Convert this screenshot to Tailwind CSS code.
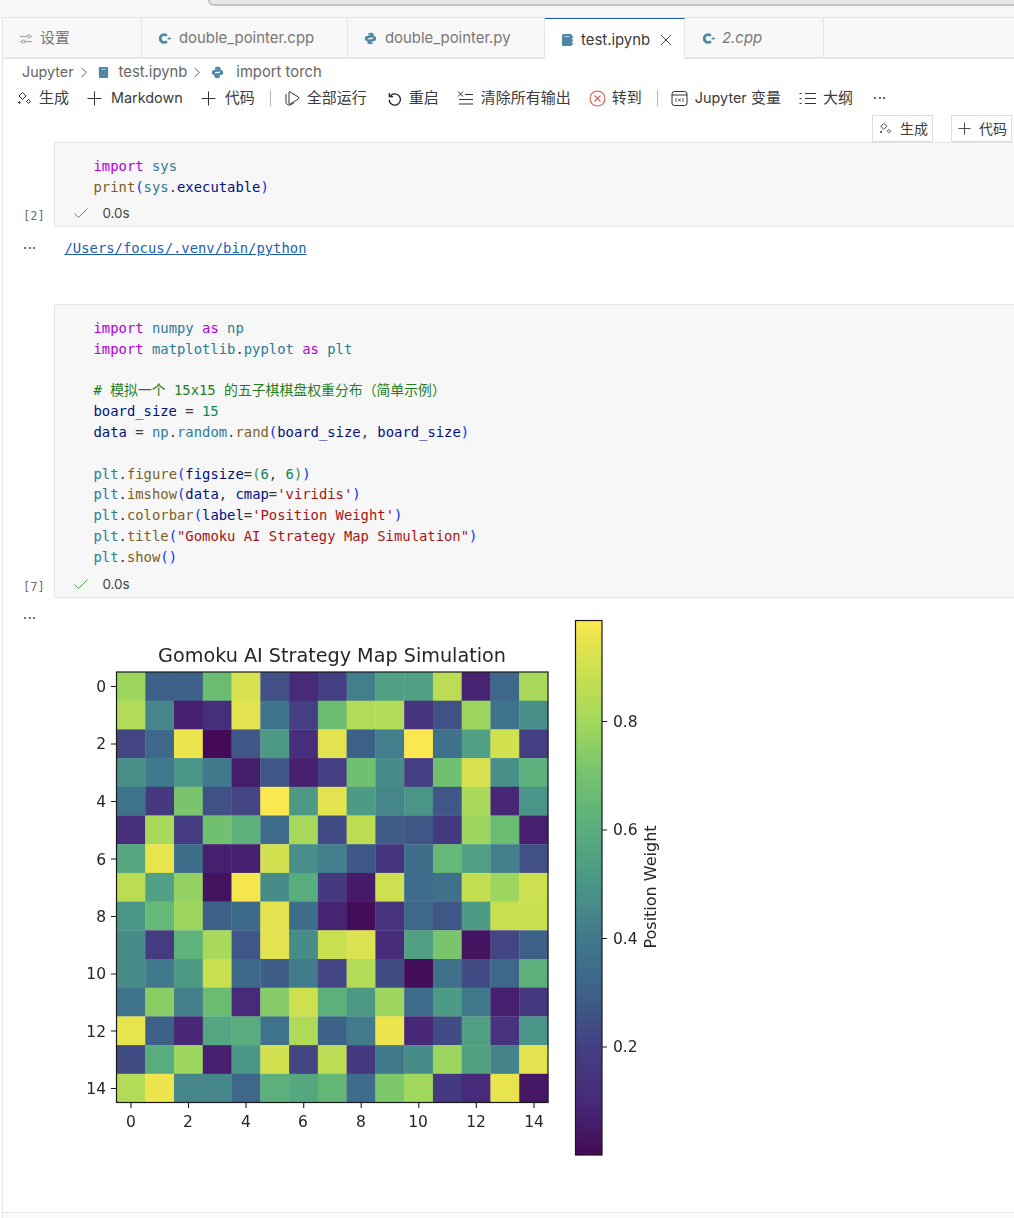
<!DOCTYPE html>
<html lang="zh-CN">
<head>
<meta charset="utf-8">
<title>test.ipynb</title>
<script src="https://cdn.jsdelivr.net/npm/@tailwindcss/browser@4"></script>
</head>
<body class="bg-white">
<div class="w-[1014px] h-[1218px] overflow-hidden flex flex-col bg-white text-[#3b3b3b] font-['Inter','Noto_Sans_CJK_SC',sans-serif] text-[15px]">

  <!-- window title strip -->
  <div class="h-[18px] shrink-0 bg-[#f8f8f8] border-b border-[#e5e5e5] pl-[208px]">
    <div class="h-[6px] bg-[#e8e8e8] border-l-2 border-b-2 border-[#c4c4c4] rounded-bl-[7px]"></div>
  </div>

  <div class="flex-1 flex flex-col ml-[2px] border-l border-[#e5e5e5] min-h-0">
    <!-- tabs -->
    <div class="h-[41px] shrink-0 flex bg-[#f8f8f8] border-b-2 border-[#e8e8e8] text-[#777777] text-[14.900px]">
      <div class="w-[139px] border-r border-[#e5e5e5] flex items-center pl-[16px] gap-[7px] pt-[2px]">
        <svg class="w-[14px] h-[14px]" viewBox="0 0 16 16" fill="none" stroke="#8a8a8a" stroke-width="1"><path d="M1 5h8M13 5h2M1 11h2M7 11h8"/><circle cx="11" cy="5" r="1.8"/><circle cx="5" cy="11" r="1.8"/></svg>
        <span>设置</span>
      </div>
      <div class="w-[206px] border-r border-[#e5e5e5] flex items-center pl-[16px] gap-[8px] pt-[2px]">
        <svg class="w-[13px] h-[13px]" viewBox="0 0 14 14" fill="none"><path d="M9.500 4A4.200 4.200 0 1 0 9.500 10" stroke="#4e86a6" stroke-width="3"/><path d="M10.200 7h3.600M12 5.200v3.600" stroke="#4e86a6" stroke-width="1"/></svg>
        <span>double_pointer.cpp</span>
      </div>
      <div class="w-[197px] border-r border-[#e5e5e5] flex items-center pl-[16px] gap-[8px] pt-[2px]">
        <svg class="w-[13px] h-[13px]" viewBox="0 0 16 16"><path fill="#4e86a6" d="M7.900 1C5 1 5 2.300 5 3v1.500h3.100V5H3.400C2 5 1 6.100 1 8s1 3 2.300 3h1.300V9.300c0-1.300 1.100-2.300 2.400-2.300h3c1 0 1.900-.9 1.900-1.900V3c0-1.200-1.400-2-4-2zM6.300 2.200a.7.7 0 1 1 0 1.500.7.7 0 0 1 0-1.500z"/><path fill="#4e86a6" d="M8.100 15c2.900 0 2.900-1.300 2.900-2v-1.500H7.900V11h4.700C14 11 15 9.900 15 8s-1-3-2.300-3h-1.300v1.700c0 1.300-1.100 2.300-2.400 2.300h-3c-1 0-1.900.9-1.900 1.900V13c0 1.200 1.400 2 4 2zM9.700 13.800a.7.7 0 1 1 0-1.500.7.7 0 0 1 0 1.500z"/></svg>
        <span>double_pointer.py</span>
      </div>
      <div class="w-[140px] -mb-[2px] border-r border-[#e5e5e5] border-t border-t-[#1f5fb0] bg-white flex items-center pl-[15px] gap-[7px] text-[#3b3b3b] text-[14.900px] pt-[2px]">
        <svg class="w-[14px] h-[14px]" viewBox="0 0 14 14"><rect x="2" y="1" width="10" height="12" rx="1.500" fill="#4e86a6"/><path d="M4.500 3.500h5" stroke="#bcd3e0" stroke-width="1"/><path d="M12.700 3v2M12.700 6.500v2M12.700 10v1.500" stroke="#4e86a6" stroke-width="1"/></svg>
        <span>test.ipynb</span>
        <svg class="w-[12px] h-[12px] ml-[3px]" viewBox="0 0 12 12" stroke="#444" stroke-width="1" fill="none"><path d="M1 1l10 10M11 1L1 11"/></svg>
      </div>
      <div class="w-[139px] border-r border-[#e5e5e5] flex items-center pl-[17px] gap-[7px] pt-[2px]">
        <svg class="w-[13px] h-[13px]" viewBox="0 0 14 14" fill="none"><path d="M9.500 4A4.200 4.200 0 1 0 9.500 10" stroke="#4e86a6" stroke-width="3"/><path d="M10.200 7h3.600M12 5.200v3.600" stroke="#4e86a6" stroke-width="1"/></svg>
        <span class="italic">2.cpp</span>
      </div>
    </div>

    <!-- breadcrumb -->
    <div class="h-[26px] shrink-0 flex items-center pl-[19px] text-[14.800px] text-[#666666]">
      <span class="text-[14.300px]">Jupyter</span>
      <svg class="w-[9px] h-[11px] ml-[6px]" viewBox="0 0 9 11" fill="none" stroke="#666" stroke-width="1"><path d="M1.500 1l5 4.500-5 4.500"/></svg>
      <svg class="w-[13px] h-[13px] ml-[8px]" viewBox="0 0 14 14"><rect x="2" y="1" width="10" height="12" rx="1.500" fill="#4e86a6"/><path d="M4.500 3.500h5" stroke="#bcd3e0" stroke-width="1"/></svg>
      <span class="ml-[9px]">test.ipynb</span>
      <svg class="w-[9px] h-[11px] ml-[6px]" viewBox="0 0 9 11" fill="none" stroke="#666" stroke-width="1"><path d="M1.500 1l5 4.500-5 4.500"/></svg>
      <svg class="w-[13px] h-[13px] ml-[9px]" viewBox="0 0 16 16"><path fill="#4e86a6" d="M7.900 1C5 1 5 2.300 5 3v1.500h3.100V5H3.400C2 5 1 6.100 1 8s1 3 2.300 3h1.300V9.300c0-1.300 1.100-2.300 2.400-2.300h3c1 0 1.900-.9 1.900-1.900V3c0-1.200-1.400-2-4-2z"/><path fill="#4e86a6" d="M8.100 15c2.900 0 2.900-1.300 2.900-2v-1.500H7.900V11h4.700C14 11 15 9.900 15 8s-1-3-2.300-3h-1.300v1.700c0 1.300-1.100 2.300-2.400 2.300h-3c-1 0-1.900.9-1.900 1.900V13c0 1.200 1.400 2 4 2z"/></svg>
      <span class="ml-[12px]">import torch</span>
    </div>

    <!-- toolbar -->
    <div class="h-[26px] shrink-0 flex items-center pl-[14px] text-[15px] text-[#3b3b3b]">
      <svg class="w-[15px] h-[15px]" viewBox="0 0 15 15" fill="none" stroke="#333" stroke-width="1"><path d="M5.500 1.500l3.500 3.500-3.500 3.500-3.500-3.500z"/><path d="M11.500 8.500l2 2-2 2-2-2z"/><path d="M2.500 10.500l1 1-1 1-1-1z" fill="#333"/></svg>
      <span class="ml-[7px]">生成</span>
      <svg class="w-[15px] h-[15px] ml-[18px]" viewBox="0 0 15 15" stroke="#333" stroke-width="1"><path d="M7.500 .5v14M.5 7.500h14"/></svg>
      <span class="ml-[9px] text-[14.400px]">Markdown</span>
      <svg class="w-[15px] h-[15px] ml-[18px]" viewBox="0 0 15 15" stroke="#333" stroke-width="1"><path d="M7.500 .5v14M.5 7.500h14"/></svg>
      <span class="ml-[9px]">代码</span>
      <div class="w-px h-[16px] bg-[#b5b5b5] ml-[15px]"></div>
      <svg class="w-[16px] h-[16px] ml-[13px]" viewBox="0 0 16 16" fill="none" stroke="#333" stroke-width="1"><path d="M5 2.500q0-1.200 1-.6l8.500 5.200q1 .9 0 1.800l-8.500 5.200q-1 .6-1-.6z"/><path d="M2 4v8.500q0 1 .8 1.500l1.700 1q.7.3 1.500 0l4-2"/></svg>
      <span class="ml-[7px]">全部运行</span>
      <svg class="w-[15px] h-[15px] ml-[20px]" viewBox="0 0 16 16" fill="none" stroke="#222" stroke-width="1.400"><path d="M3.500 5.500A6 6 0 1 1 2.300 9.500"/><path d="M2.500 2v4h4"/></svg>
      <span class="ml-[7px]">重启</span>
      <svg class="w-[16px] h-[14px] ml-[18px]" viewBox="0 0 16 14" fill="none" stroke="#333" stroke-width="1"><path d="M1 .5l5 5M6 .5L1 5.500M8 3.500h8M2 8.500h14M2 13h14"/></svg>
      <span class="ml-[8px]">清除所有输出</span>
      <svg class="w-[17px] h-[17px] ml-[18px]" viewBox="0 0 17 17" fill="none" stroke="#e5564d" stroke-width="1.100"><circle cx="8.500" cy="8.500" r="7.500"/><path d="M5.500 5.500l6 6M11.500 5.500l-6 6"/></svg>
      <span class="ml-[6px]">转到</span>
      <div class="w-px h-[16px] bg-[#b5b5b5] ml-[15px]"></div>
      <svg class="w-[17px] h-[17px] ml-[13px]" viewBox="0 0 17 17" fill="none" stroke="#333" stroke-width="1"><rect x="1" y="1.500" width="15" height="14" rx="2.500"/><path d="M1 5h15"/><path d="M5 8v4M12 8v4M7.300 8.500l2.400 3M9.700 8.500l-2.400 3" stroke-width=".8"/></svg>
      <span class="ml-[7px]"><span class="text-[14.400px]">Jupyter</span> 变量</span>
      <svg class="w-[17px] h-[13px] ml-[18px]" viewBox="0 0 17 13" fill="none" stroke="#333" stroke-width="1"><path d="M6 1.500h11M6 6.500h11M6 11.500h11M.5 1.500h2M.5 6.500h2M.5 11.500h2"/></svg>
      <span class="ml-[7px]">大纲</span>
      <div class="ml-[21px] flex gap-[2.500px]"><i class="block w-[2px] h-[2px] rounded-full bg-[#333]"></i><i class="block w-[2px] h-[2px] rounded-full bg-[#333]"></i><i class="block w-[2px] h-[2px] rounded-full bg-[#333]"></i></div>
    </div>

    <!-- cell toolbar -->
    <div class="h-[31px] shrink-0 flex justify-end gap-[18px] pr-[2px] pt-[4px] text-[#3b3b3b] text-[14px]">
      <div class="w-[61px] h-[27px] border border-[#dcdcdc] flex items-center pl-[6px] gap-[8px]">
        <svg class="w-[13px] h-[13px]" viewBox="0 0 15 15" fill="none" stroke="#333" stroke-width="1"><path d="M5.500 1.500l3.500 3.500-3.500 3.500-3.500-3.500z"/><path d="M11.500 8.500l2 2-2 2-2-2z"/><path d="M2.500 10.500l1 1-1 1-1-1z" fill="#333"/></svg>
        <span>生成</span>
      </div>
      <div class="w-[61px] h-[27px] border border-[#dcdcdc] flex items-center pl-[6px] gap-[8px]">
        <svg class="w-[13px] h-[13px]" viewBox="0 0 15 15" stroke="#333" stroke-width="1"><path d="M7.500 .5v14M.5 7.500h14"/></svg>
        <span>代码</span>
      </div>
    </div>

    <!-- cell 1 -->
    <div class="shrink-0 flex h-[85px]">
      <div class="w-[51px] shrink-0 relative"><span class="absolute left-[20px] bottom-[2px] text-[#6e6e6e] font-['DejaVu_Sans_Mono',monospace] text-[12px]">[2]</span></div>
      <div class="flex-1 bg-[#f7f7f7] border border-r-0 border-[#e5e5e5] pl-[38.500px] pt-[13px] font-['DejaVu_Sans_Mono','Noto_Sans_CJK_SC',monospace] text-[13.870px] leading-[20.800px]">
        <div><span class="text-[#af00db]">import</span> <span class="text-[#2f7a96]">sys</span></div>
        <div><span class="text-[#795e26]">print</span><span class="text-[#0431fa]">(</span><span class="text-[#2f7a96]">sys</span>.<span class="text-[#001080]">executable</span><span class="text-[#0431fa]">)</span></div>
        <div class="h-[26px] flex items-center -ml-[20px] mt-[3px] font-['Inter',sans-serif] text-[13.400px] text-[#444]">
          <svg class="w-[14px] h-[11px]" viewBox="0 0 14 11" fill="none" stroke="#4f9a4f" stroke-width="1"><path d="M.5 5.500l4 4 9-9"/></svg>
          <span class="ml-[15px]">0.0s</span>
        </div>
      </div>
    </div>

    <!-- output 1 -->
    <div class="shrink-0 h-[77px] flex">
      <div class="w-[51px] shrink-0 pl-[21px] pt-[20px]"><div class="flex gap-[2.500px]"><i class="block w-[2px] h-[2px] rounded-full bg-[#444]"></i><i class="block w-[2px] h-[2px] rounded-full bg-[#444]"></i><i class="block w-[2px] h-[2px] rounded-full bg-[#444]"></i></div></div>
      <div class="pl-[10.500px] pt-[11px] font-['DejaVu_Sans_Mono',monospace] text-[13.870px] leading-[20.800px] text-[#1a5fb4] underline">/Users/focus/.venv/bin/python</div>
    </div>

    <!-- cell 2 -->
    <div class="shrink-0 flex h-[294px]">
      <div class="w-[51px] shrink-0 relative"><span class="absolute left-[20px] bottom-[2px] text-[#6e6e6e] font-['DejaVu_Sans_Mono',monospace] text-[12px]">[7]</span></div>
      <div class="flex-1 bg-[#f7f7f7] border border-r-0 border-[#e5e5e5] pl-[38.500px] pt-[13px] font-['DejaVu_Sans_Mono','Noto_Sans_CJK_SC',monospace] text-[13.870px] leading-[20.800px]">
        <div><span class="text-[#af00db]">import</span> <span class="text-[#2f7a96]">numpy</span> <span class="text-[#af00db]">as</span> <span class="text-[#2f7a96]">np</span></div>
        <div><span class="text-[#af00db]">import</span> <span class="text-[#2f7a96]">matplotlib</span>.<span class="text-[#2f7a96]">pyplot</span> <span class="text-[#af00db]">as</span> <span class="text-[#2f7a96]">plt</span></div>
        <div class="h-[20.800px]"></div>
        <div class="text-[#1f7f1f]"># 模拟一个 15x15 的五子棋棋盘权重分布（简单示例）</div>
        <div><span class="text-[#001080]">board_size</span> = <span class="text-[#098658]">15</span></div>
        <div><span class="text-[#001080]">data</span> = <span class="text-[#2f7a96]">np</span>.<span class="text-[#2f7a96]">random</span>.<span class="text-[#795e26]">rand</span><span class="text-[#0431fa]">(</span><span class="text-[#001080]">board_size</span>, <span class="text-[#001080]">board_size</span><span class="text-[#0431fa]">)</span></div>
        <div class="h-[20.800px]"></div>
        <div><span class="text-[#2f7a96]">plt</span>.<span class="text-[#795e26]">figure</span><span class="text-[#0431fa]">(</span><span class="text-[#001080]">figsize</span>=<span class="text-[#319331]">(</span><span class="text-[#098658]">6</span>, <span class="text-[#098658]">6</span><span class="text-[#319331]">)</span><span class="text-[#0431fa]">)</span></div>
        <div><span class="text-[#2f7a96]">plt</span>.<span class="text-[#795e26]">imshow</span><span class="text-[#0431fa]">(</span><span class="text-[#001080]">data</span>, <span class="text-[#001080]">cmap</span>=<span class="text-[#a31515]">'viridis'</span><span class="text-[#0431fa]">)</span></div>
        <div><span class="text-[#2f7a96]">plt</span>.<span class="text-[#795e26]">colorbar</span><span class="text-[#0431fa]">(</span><span class="text-[#001080]">label</span>=<span class="text-[#a31515]">'Position Weight'</span><span class="text-[#0431fa]">)</span></div>
        <div><span class="text-[#2f7a96]">plt</span>.<span class="text-[#795e26]">title</span><span class="text-[#0431fa]">(</span><span class="text-[#a31515]">"Gomoku AI Strategy Map Simulation"</span><span class="text-[#0431fa]">)</span></div>
        <div><span class="text-[#2f7a96]">plt</span>.<span class="text-[#795e26]">show</span><span class="text-[#0431fa]">()</span></div>
        <div class="h-[26px] flex items-center -ml-[20px] mt-[4px] font-['Inter',sans-serif] text-[13.400px] text-[#444]">
          <svg class="w-[14px] h-[11px]" viewBox="0 0 14 11" fill="none" stroke="#4f9a4f" stroke-width="1"><path d="M.5 5.500l4 4 9-9"/></svg>
          <span class="ml-[15px]">0.0s</span>
        </div>
      </div>
    </div>

    <!-- output 2 : plot -->
    <div class="flex-1 flex min-h-0">
      <div class="w-[51px] shrink-0 pl-[21px] pt-[19px]"><div class="flex gap-[2.500px]"><i class="block w-[2px] h-[2px] rounded-full bg-[#444]"></i><i class="block w-[2px] h-[2px] rounded-full bg-[#444]"></i><i class="block w-[2px] h-[2px] rounded-full bg-[#444]"></i></div></div>
      <svg id="plot" class="w-[620px] h-[570px] mt-[12px] ml-[6px] shrink-0 blur-[0.3px]" viewBox="60 610 620 570" font-family="'DejaVu Sans',sans-serif" fill="#262626">
        <defs>
          <linearGradient id="vir" x1="0" y1="1" x2="0" y2="0">
            <stop offset="0" stop-color="#440a57"/><stop offset=".1" stop-color="#472a79"/><stop offset=".2" stop-color="#443f82"/><stop offset=".3" stop-color="#3d6088"/><stop offset=".4" stop-color="#40788c"/><stop offset=".5" stop-color="#4a9488"/><stop offset=".6" stop-color="#58ac7e"/><stop offset=".7" stop-color="#70c070"/><stop offset=".8" stop-color="#9cd65e"/><stop offset=".9" stop-color="#c8df4f"/><stop offset="1" stop-color="#fbe74e"/>
          </linearGradient>
        </defs>
        <g id="cells"></g>
        <rect x="116.500" y="672" width="431.500" height="430.500" fill="none" stroke="#1a1a1a" stroke-width="1.200"/>
        <text x="332" y="662" font-size="19.200px" text-anchor="middle">Gomoku AI Strategy Map Simulation</text>
        <g stroke="#1a1a1a" stroke-width="1.100">
          <path d="M131 1103v5M188.500 1103v5M246 1103v5M303.700 1103v5M361.200 1103v5M418.800 1103v5M476.300 1103v5M534 1103v5"/>
          <path d="M116 686.500h-5M116 744h-5M116 801.500h-5M116 859h-5M116 916.500h-5M116 974h-5M116 1031h-5M116 1088.500h-5"/>
          <path d="M602 721.500h5M602 830h5M602 938.500h5M602 1047h5"/>
        </g>
        <g font-size="15.500px" text-anchor="middle">
          <text x="131" y="1127">0</text><text x="188" y="1127">2</text><text x="246" y="1127">4</text><text x="303" y="1127">6</text><text x="361" y="1127">8</text><text x="418" y="1127">10</text><text x="476" y="1127">12</text><text x="534" y="1127">14</text>
        </g>
        <g font-size="15.500px" text-anchor="end">
          <text x="106" y="692">0</text><text x="106" y="749">2</text><text x="106" y="807">4</text><text x="106" y="865">6</text><text x="106" y="922">8</text><text x="106" y="979">10</text><text x="106" y="1037">12</text><text x="106" y="1094">14</text>
        </g>
        <g font-size="15.500px">
          <text x="613" y="727">0.8</text><text x="613" y="835">0.6</text><text x="613" y="944">0.4</text><text x="613" y="1052">0.2</text>
        </g>
        <rect x="575.500" y="620.500" width="26.500" height="534.500" fill="url(#vir)" stroke="#1a1a1a" stroke-width="1.200"/>
        <text transform="translate(656 887) rotate(-90)" font-size="16px" text-anchor="middle">Position Weight</text>
      </svg>
    </div>

    <div class="h-[6px] shrink-0 bg-[#fafafa] border-t border-[#e5e5e5]"></div>
  </div>
</div>
<script>
var d=[
[.8,.3,.3,.68,.93,.25,.1,.2,.42,.55,.55,.87,.08,.33,.83],
[.85,.45,.07,.12,.95,.38,.2,.68,.85,.85,.15,.25,.8,.38,.48],
[.22,.33,.97,.0,.27,.52,.12,.95,.3,.42,1,.37,.55,.92,.2],
[.48,.4,.5,.4,.06,.27,.07,.2,.7,.47,.2,.7,.93,.48,.62],
[.38,.17,.72,.25,.22,1,.52,.95,.53,.45,.5,.27,.83,.09,.5],
[.12,.83,.18,.7,.62,.35,.82,.24,.88,.29,.27,.17,.8,.68,.07],
[.58,.96,.36,.07,.07,.92,.48,.42,.28,.15,.36,.66,.55,.42,.25],
[.87,.55,.78,.03,.99,.47,.6,.17,.05,.91,.35,.37,.89,.8,.91],
[.5,.66,.8,.3,.34,.95,.36,.08,.01,.14,.33,.27,.53,.9,.9],
[.47,.18,.63,.83,.27,.95,.47,.9,.94,.1,.55,.72,.03,.22,.3],
[.47,.4,.53,.9,.34,.29,.41,.22,.85,.24,.01,.37,.24,.33,.62],
[.38,.76,.43,.68,.1,.75,.91,.62,.52,.8,.35,.53,.4,.07,.16],
[.96,.3,.09,.57,.6,.38,.84,.31,.41,.97,.09,.24,.55,.14,.5],
[.24,.6,.8,.07,.51,.92,.22,.87,.17,.4,.47,.8,.56,.44,.95],
[.85,.97,.45,.45,.33,.62,.58,.65,.35,.73,.81,.17,.1,.96,.04]];
var p=[[68,10,87],[71,42,121],[68,63,130],[61,96,136],[64,120,140],[74,148,136],[88,172,126],[112,192,112],[156,214,94],[200,223,79],[251,231,78]];
function col(v){var t=Math.min(v*10,9.999),i=Math.floor(t),f=t-i,a=p[i],b=p[i+1];return 'rgb('+[0,1,2].map(function(k){return Math.round(a[k]+(b[k]-a[k])*f)}).join(',')+')';}
var g=document.getElementById('cells'),w=431.5/15,h=430.5/15,NS='http://www.w3.org/2000/svg';
d.forEach(function(r,y){r.forEach(function(v,x){var e=document.createElementNS(NS,'rect');e.setAttribute('x',116.5+x*w);e.setAttribute('y',672+y*h);e.setAttribute('width',w+.3);e.setAttribute('height',h+.3);e.setAttribute('fill',col(v));g.appendChild(e);});});
</script>
</body>
</html>
